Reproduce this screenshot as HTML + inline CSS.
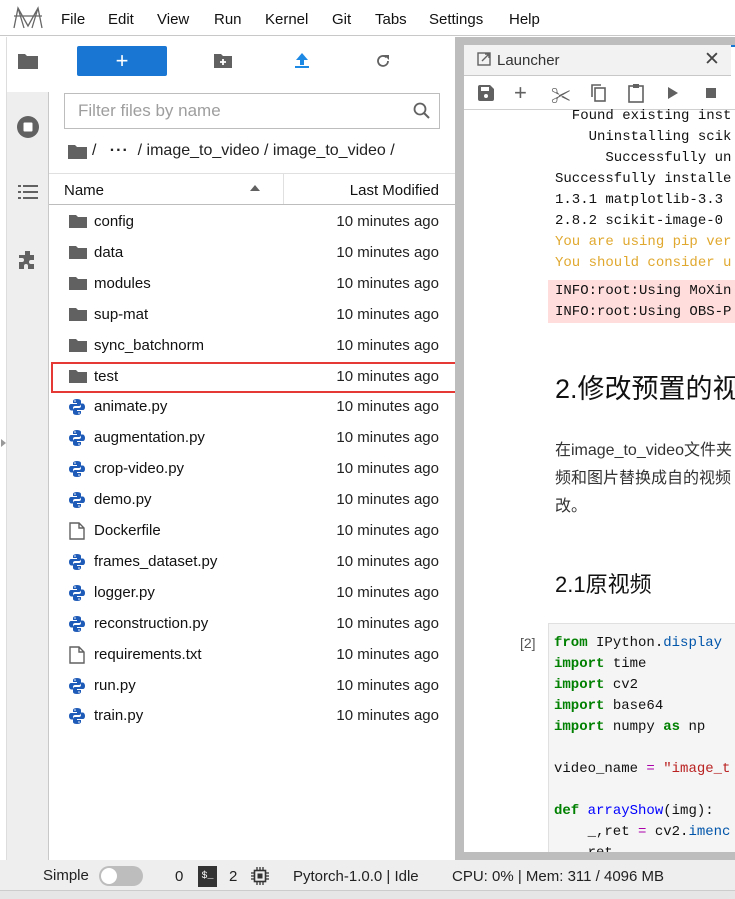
<!DOCTYPE html>
<html><head><meta charset="utf-8"><style>
*{box-sizing:border-box;margin:0;padding:0}
body{width:735px;height:899px;overflow:hidden;background:#fff;font-family:"Liberation Sans","Noto Sans CJK SC",sans-serif;color:#212121;position:relative}
.abs{position:absolute}
.menu span{position:absolute;top:11px;font-size:15px;color:#111}
.row{position:absolute;left:49px;width:406px;height:31px;font-size:15px;color:#111}
.row .ic{position:absolute;left:20px;top:8px}
.row .n{position:absolute;left:45px;top:7px}
.row .d{position:absolute;right:16px;top:7px;color:#222}
.mono{font-family:"Liberation Mono","DejaVu Sans Mono",monospace;font-size:14px;line-height:21px;white-space:pre;position:absolute}
.kw{color:#008000;font-weight:bold}
</style></head><body>
<div class="abs" style="left:0;top:0;width:735px;height:36px;background:#fff;border-bottom:1px solid #c8c8c8"></div>
<svg class="abs" style="left:12px;top:6px" width="32" height="24" viewBox="0 0 32 24"><path d="M2 22 L6 2 L16 20 L26 2 L30 22 M6 2 L12 22 M26 2 L20 22 M2 10 L30 10" stroke="#666" stroke-width="1.3" fill="none"/></svg>
<div class="menu"><span style="left:61px">File</span><span style="left:108px">Edit</span><span style="left:157px">View</span><span style="left:214px">Run</span><span style="left:265px">Kernel</span><span style="left:332px">Git</span><span style="left:375px">Tabs</span><span style="left:429px">Settings</span><span style="left:509px">Help</span></div>
<div class="abs" style="left:0;top:37px;width:7px;height:823px;background:#fff;border-right:1px solid #ddd"></div>
<div class="abs" style="left:7px;top:37px;width:42px;height:823px;background:#eee;border-right:1px solid #c8c8c8"></div>
<div class="abs" style="left:7px;top:37px;width:42px;height:55px;background:#fff"></div>
<svg class="abs" style="left:17px;top:52px" width="22" height="18"><path d="M1 2h7l2 2h11v13H1z" fill="#616161"/></svg>
<svg class="abs" style="left:16px;top:115px" width="24" height="24"><circle cx="12" cy="12" r="11" fill="#616161"/><rect x="7.5" y="7.5" width="9" height="9" fill="#fff" rx="1"/></svg>
<svg class="abs" style="left:18px;top:183px" width="20" height="18" fill="#616161"><rect x="0" y="2" width="3" height="2"/><rect x="5" y="2" width="15" height="2"/><rect x="0" y="8" width="3" height="2"/><rect x="5" y="8" width="15" height="2"/><rect x="0" y="14" width="3" height="2"/><rect x="5" y="14" width="15" height="2"/></svg>
<svg class="abs" style="left:17px;top:249px" width="22" height="22"><path d="M8 2h5v4h4v5h-3a2 2 0 1 0 0 4h3v5h-6v-3a2 2 0 1 0-4 0v3H2v-7h3a2 2 0 1 0 0-4H2V6h6z" fill="#616161"/></svg>
<div class="abs" style="left:1px;top:439px;width:0;height:0;border-top:4px solid transparent;border-bottom:4px solid transparent;border-left:5px solid #999"></div>
<div class="abs" style="left:77px;top:46px;width:90px;height:30px;background:#1976d2;border-radius:2px;color:#fff;font-size:22px;text-align:center;line-height:29px">+</div>
<svg class="abs" style="left:214px;top:53px" width="18" height="15"><path d="M0 1h7l2 2h9v12H0z" fill="#616161"/><path d="M9 6v6M6 9h6" stroke="#fff" stroke-width="1.8"/></svg>
<svg class="abs" style="left:294px;top:52px" width="16" height="17"><path d="M8 1L2 8h4v5h4V8h4z" fill="#1e88e5"/><rect x="1" y="14" width="14" height="2" fill="#1e88e5"/></svg>
<svg class="abs" style="left:375px;top:53px" width="16" height="16"><path d="M13 8a5 5 0 1 1-1.5-3.6" stroke="#616161" stroke-width="1.8" fill="none"/><path d="M9 2h5v5z" fill="#616161"/></svg>
<div class="abs" style="left:64px;top:93px;width:376px;height:36px;border:1px solid #bdbdbd;background:#fff"></div>
<div class="abs" style="left:78px;top:101px;font-size:17px;color:#9e9e9e">Filter files by name</div>
<svg class="abs" style="left:412px;top:101px" width="20" height="20"><circle cx="8" cy="8" r="5.5" stroke="#616161" stroke-width="1.8" fill="none"/><path d="M12 12l5 5" stroke="#616161" stroke-width="2"/></svg>
<svg class="abs" style="left:68px;top:144px" width="19" height="15"><path d="M0 1h7l2 2h10v12H0z" fill="#616161"/></svg>
<div class="abs" style="left:92px;top:142px;font-size:16px;color:#222">/ &nbsp;&nbsp;<b style="letter-spacing:1px">···</b>&nbsp; / image_to_video / image_to_video /</div>
<div class="abs" style="left:49px;top:173px;width:406px;height:32px;border-top:1px solid #e0e0e0;border-bottom:1px solid #bdbdbd"></div>
<div class="abs" style="left:283px;top:174px;width:1px;height:30px;background:#e0e0e0"></div>
<div class="abs" style="left:64px;top:182px;font-size:15px;color:#111">Name</div>
<div class="abs" style="left:250px;top:185px;border-left:5px solid transparent;border-right:5px solid transparent;border-bottom:6px solid #616161"></div>
<div class="abs" style="left:339px;top:182px;width:100px;text-align:right;font-size:15px;color:#111">Last Modified</div>

<div id="rows"></div>
<div class="abs" style="left:51px;top:362px;width:406px;height:31px;border:2px solid #e53935"></div>

<div class="abs" style="left:455px;top:37px;width:9px;height:823px;background:#bdbdbd"></div>
<div class="abs" style="left:464px;top:37px;width:271px;height:8px;background:#bdbdbd"></div>
<div class="abs" style="left:464px;top:45px;width:267px;height:31px;background:#f2f2f2;border-bottom:1px solid #c8c8c8"></div>
<div class="abs" style="left:731px;top:45px;width:4px;height:31px;background:#fff;border-top:2px solid #1976d2"></div>
<svg class="abs" style="left:477px;top:52px" width="14" height="14"><rect x="1" y="1" width="12" height="12" fill="none" stroke="#616161" stroke-width="1.4"/><path d="M5 9l7-7M8 2h4v4" stroke="#616161" stroke-width="1.4" fill="none"/></svg>
<div class="abs" style="left:497px;top:52px;font-size:15px;color:#333">Launcher</div>
<div class="abs" style="left:704px;top:48px;font-size:19px;color:#444">✕</div>
<div class="abs" style="left:464px;top:77px;width:271px;height:33px;background:#fff;border-bottom:1px solid #d0d0d0"></div>
<svg class="abs" style="left:477px;top:84px" width="18" height="18"><path d="M1 3a2 2 0 0 1 2-2h10l4 4v10a2 2 0 0 1-2 2H3a2 2 0 0 1-2-2z" fill="#616161"/><rect x="4" y="3" width="8" height="4" fill="#fff"/><circle cx="9" cy="12" r="2" fill="#fff"/></svg>
<div class="abs" style="left:514px;top:80px;font-size:22px;color:#616161">+</div>
<div class="abs" style="left:551px;top:80px;font-size:20px;color:#616161">✂</div>
<svg class="abs" style="left:590px;top:83px" width="16" height="20"><rect x="5" y="5" width="10" height="13" fill="none" stroke="#616161" stroke-width="1.6"/><path d="M2 14V2h9" fill="none" stroke="#616161" stroke-width="1.6"/></svg>
<svg class="abs" style="left:627px;top:83px" width="18" height="20"><rect x="2" y="3" width="14" height="16" fill="none" stroke="#616161" stroke-width="1.6"/><rect x="6" y="1" width="6" height="4" fill="#616161"/></svg>
<div class="abs" style="left:668px;top:87px;border-top:6px solid transparent;border-bottom:6px solid transparent;border-left:10px solid #616161"></div>
<div class="abs" style="left:706px;top:88px;width:10px;height:10px;background:#616161"></div>
<div class="mono" style="left:555px;top:106px;color:#111">  Found existing inst
    Uninstalling scik
      Successfully un
Successfully installe
1.3.1 matplotlib-3.3
2.8.2 scikit-image-0
<span style="color:#e0a82e">You are using pip ver
You should consider u</span></div>
<div class="abs" style="left:548px;top:280px;width:187px;height:43px;background:#fdd"></div>
<div class="mono" style="left:555px;top:281px;color:#111">INFO:root:Using MoXin
INFO:root:Using OBS-P</div>
<div class="abs" style="left:555px;top:367px;font-size:27px;color:#111;white-space:nowrap">2.修改预置的视</div>
<div class="abs" style="left:555px;top:437px;font-size:16px;line-height:28px;color:#333;white-space:nowrap">在image_to_video文件夹<br>频和图片替换成自的视频<br>改。</div>
<div class="abs" style="left:555px;top:567px;font-size:22px;color:#111;white-space:nowrap">2.1原视频</div>
<div class="abs" style="left:520px;top:635px;font-size:14px;color:#555">[2]</div>
<div class="abs" style="left:548px;top:623px;width:187px;height:237px;background:#f5f5f5;border:1px solid #e0e0e0;border-right:none"></div>
<div class="mono" style="left:554px;top:633px;color:#111"><span class="kw">from</span> IPython.<span style="color:#0055aa">display</span>
<span class="kw">import</span> time
<span class="kw">import</span> cv2
<span class="kw">import</span> base64
<span class="kw">import</span> numpy <span class="kw">as</span> np

video_name <span style="color:#a0a">=</span> <span style="color:#ba2121">"image_t</span>

<span class="kw">def</span> <span style="color:#0000ff">arrayShow</span>(img):
    _,ret <span style="color:#a0a">=</span> cv2.<span style="color:#0055aa">imenc</span>
    ret</div>
<div class="abs" style="left:464px;top:852px;width:271px;height:8px;background:#bdbdbd"></div>
<div class="abs" style="left:0;top:860px;width:735px;height:31px;background:#eee;border-bottom:1px solid #ccc"></div>
<div class="abs" style="left:0;top:891px;width:735px;height:8px;background:#e6e6e6"></div>
<div class="abs" style="left:43px;top:867px;font-size:15px;color:#222">Simple</div>
<div class="abs" style="left:99px;top:866px;width:44px;height:20px;border-radius:10px;background:#bdbdbd"></div>
<div class="abs" style="left:101px;top:868px;width:16px;height:16px;border-radius:8px;background:#fff"></div>
<div class="abs" style="left:175px;top:868px;font-size:15px;color:#222">0</div>
<div class="abs" style="left:198px;top:866px;width:19px;height:21px;background:#333;color:#fff;font-size:10px;line-height:22px;text-align:center;font-family:'Liberation Mono',monospace">$_</div>
<div class="abs" style="left:229px;top:868px;font-size:15px;color:#222">2</div>
<svg class="abs" style="left:251px;top:867px" width="18" height="18"><rect x="3.5" y="3.5" width="11" height="11" fill="none" stroke="#333" stroke-width="1.6"/><rect x="6.5" y="6.5" width="5" height="5" fill="#333"/><path d="M6 0v3M9 0v3M12 0v3M6 15v3M9 15v3M12 15v3M0 6h3M0 9h3M0 12h3M15 6h3M15 9h3M15 12h3" stroke="#333" stroke-width="1.3"/></svg>
<div class="abs" style="left:293px;top:868px;font-size:15px;color:#222">Pytorch-1.0.0 | Idle</div>
<div class="abs" style="left:452px;top:868px;font-size:15px;color:#222">CPU: 0% | Mem: 311 / 4096 MB</div>

<script>
var f=[["d","config"],["d","data"],["d","modules"],["d","sup-mat"],["d","sync_batchnorm"],["d","test"],["p","animate.py"],["p","augmentation.py"],["p","crop-video.py"],["p","demo.py"],["f","Dockerfile"],["p","frames_dataset.py"],["p","logger.py"],["p","reconstruction.py"],["f","requirements.txt"],["p","run.py"],["p","train.py"]];
var h="";
f.forEach(function(e,i){var t=206+i*30.9;var ic;
if(e[0]=="d")ic='<svg class="ic" width="18" height="15"><path d="M0 1h7l2 2h9v11H0z" fill="#616161"/></svg>';
else if(e[0]=="p")ic='<svg class="ic" width="16" height="16"><path d="M8 0C4 0 4 2 4 2v2h4v1H2S0 5 0 8s2 3.5 2 3.5h2V9s0-2 2-2h4s2 0 2-2V2s0-2-4-2z" fill="#1e5bb8"/><path d="M8 16c4 0 4-2 4-2v-2H8v-1h6s2 0 2-3-2-3.5-2-3.5h-2V7s0 2-2 2H6s-2 0-2 2v3s0 2 4 2z" fill="#1e5bb8"/><circle cx="6" cy="2" r=".8" fill="#fff"/><circle cx="10" cy="14" r=".8" fill="#fff"/></svg>';
else ic='<svg class="ic" width="16" height="18" style="top:7px"><path d="M1 1h9l5 5v11H1z M10 1v5h5" fill="none" stroke="#616161" stroke-width="1.4"/></svg>';
h+='<div class="row" style="top:'+t+'px">'+ic+'<span class="n">'+e[1]+'</span><span class="d">10 minutes ago</span></div>';});
document.getElementById("rows").outerHTML=h;
</script>
</body></html>
